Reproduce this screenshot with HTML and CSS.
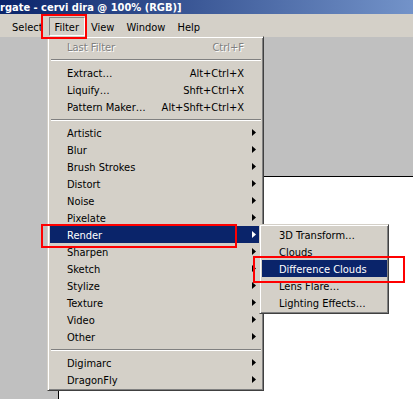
FILE: index.html
```html
<!DOCTYPE html>
<html lang="en">
<head>
  <meta charset="UTF-8" />
  <title>Photoshop - Filter menu</title>
  <link rel="stylesheet" href="styles.css">
</head>
<body>
  <div class="window">
    <div class="titlebar">rgate - cervi dira @ 100% (RGB)]</div>

    <div class="menubar">
      <span class="menubar-item">Select</span>
      <span class="menubar-item pressed">Filter</span>
      <span class="menubar-item">View</span>
      <span class="menubar-item">Window</span>
      <span class="menubar-item">Help</span>
    </div>

    <div class="workspace">
      <div class="canvas"></div>
    </div>

    <div class="menu filter-menu">
      <div class="item disabled"><span class="label">Last Filter</span><span class="key">Ctrl+F</span></div>
      <div class="sep"></div>
      <div class="item"><span class="label">Extract…</span><span class="key">Alt+Ctrl+X</span></div>
      <div class="item"><span class="label">Liquify…</span><span class="key">Shft+Ctrl+X</span></div>
      <div class="item"><span class="label">Pattern Maker…</span><span class="key">Alt+Shft+Ctrl+X</span></div>
      <div class="sep"></div>
      <div class="item"><span class="label">Artistic</span><span class="arrow"></span></div>
      <div class="item"><span class="label">Blur</span><span class="arrow"></span></div>
      <div class="item"><span class="label">Brush Strokes</span><span class="arrow"></span></div>
      <div class="item"><span class="label">Distort</span><span class="arrow"></span></div>
      <div class="item"><span class="label">Noise</span><span class="arrow"></span></div>
      <div class="item"><span class="label">Pixelate</span><span class="arrow"></span></div>
      <div class="item active"><span class="label">Render</span><span class="arrow"></span></div>
      <div class="item"><span class="label">Sharpen</span><span class="arrow"></span></div>
      <div class="item"><span class="label">Sketch</span><span class="arrow"></span></div>
      <div class="item"><span class="label">Stylize</span><span class="arrow"></span></div>
      <div class="item"><span class="label">Texture</span><span class="arrow"></span></div>
      <div class="item"><span class="label">Video</span><span class="arrow"></span></div>
      <div class="item"><span class="label">Other</span><span class="arrow"></span></div>
      <div class="sep"></div>
      <div class="item"><span class="label">Digimarc</span><span class="arrow"></span></div>
      <div class="item"><span class="label">DragonFly</span><span class="arrow"></span></div>
    </div>

    <div class="menu render-menu">
      <div class="item"><span class="label">3D Transform…</span></div>
      <div class="item"><span class="label">Clouds</span></div>
      <div class="item active"><span class="label">Difference Clouds</span></div>
      <div class="item"><span class="label">Lens Flare…</span></div>
      <div class="item"><span class="label">Lighting Effects…</span></div>
    </div>

    <div class="mark mark-filter"></div>
    <div class="mark mark-render"></div>
    <div class="mark mark-clouds"></div>
  </div>
</body>
</html>
```

FILE: styles.css
```css
body {
  margin: 0;
  font-family: "DejaVu Sans Condensed", "Liberation Sans", sans-serif;
  font-size: 11px;
}
.window {
  position: relative;
  width: 413px;
  height: 399px;
  overflow: hidden;
  background: #c0c0c0;
}
.titlebar {
  height: 14px;
  line-height: 15px;
  color: #fff;
  font-weight: bold;
  white-space: nowrap;
  background: linear-gradient(to right, #0a246a, #7393c9);
}
.menubar {
  display: flex;
  height: 23px;
  padding: 3px 0 0 6px;
  box-sizing: border-box;
  background: #d4d0c8;
}
.menubar-item {
  height: 19px;
  line-height: 17px;
  padding: 1px 5px 0;
  border: 1px solid transparent;
  box-sizing: border-box;
}
.menubar-item.pressed {
  border-color: #808080 #fff #fff #808080;
}
.workspace {
  height: 362px;
  padding: 139px 0 0 58px;
  box-sizing: border-box;
}
.canvas {
  height: 100%;
  background: #fff;
  border-top: 1px solid #000;
  border-left: 1px solid #000;
}

/* popup menus */
.menu {
  position: absolute;
  background: #d4d0c8;
  border: 1px solid;
  border-color: #d4d0c8 #404040 #404040 #d4d0c8;
  box-shadow: inset 1px 1px #fff, inset -1px -1px #808080;
  padding: 1px 1px 2px 2px;
  box-sizing: border-box;
}
.filter-menu {
  left: 47px;
  top: 36px;
  width: 217px;
}
.render-menu {
  left: 259px;
  top: 224px;
  width: 130px;
}
.item {
  display: flex;
  align-items: center;
  height: 17px;
  padding: 1px 6px 0 17px;
  box-sizing: border-box;
  white-space: nowrap;
}
.item .label {
  flex: 1;
}
.item .key {
  margin-right: 12px;
}
.item .arrow {
  width: 4px;
  height: 7px;
  margin-top: -1px;
  background: #000;
  clip-path: polygon(0 0, 100% 50%, 0 100%);
}
.item.active {
  background: #0a246a;
  color: #fff;
}
.item.active .arrow {
  background: #fff;
}
.item.disabled {
  color: #808080;
  text-shadow: 1px 1px #fff;
}
.sep {
  height: 9px;
  margin: 0 1px;
  box-sizing: border-box;
  padding-top: 4px;
}
.sep::before {
  content: "";
  display: block;
  border-top: 1px solid #808080;
  border-bottom: 1px solid #fff;
}

/* red highlight boxes */
.mark {
  position: absolute;
  border: 2px solid #f00;
  box-sizing: border-box;
}
.mark-filter {
  left: 41px;
  top: 14px;
  width: 46px;
  height: 25px;
}
.mark-render {
  left: 41px;
  top: 224px;
  width: 196px;
  height: 24px;
}
.mark-clouds {
  left: 253px;
  top: 256px;
  width: 152px;
  height: 27px;
}
```
